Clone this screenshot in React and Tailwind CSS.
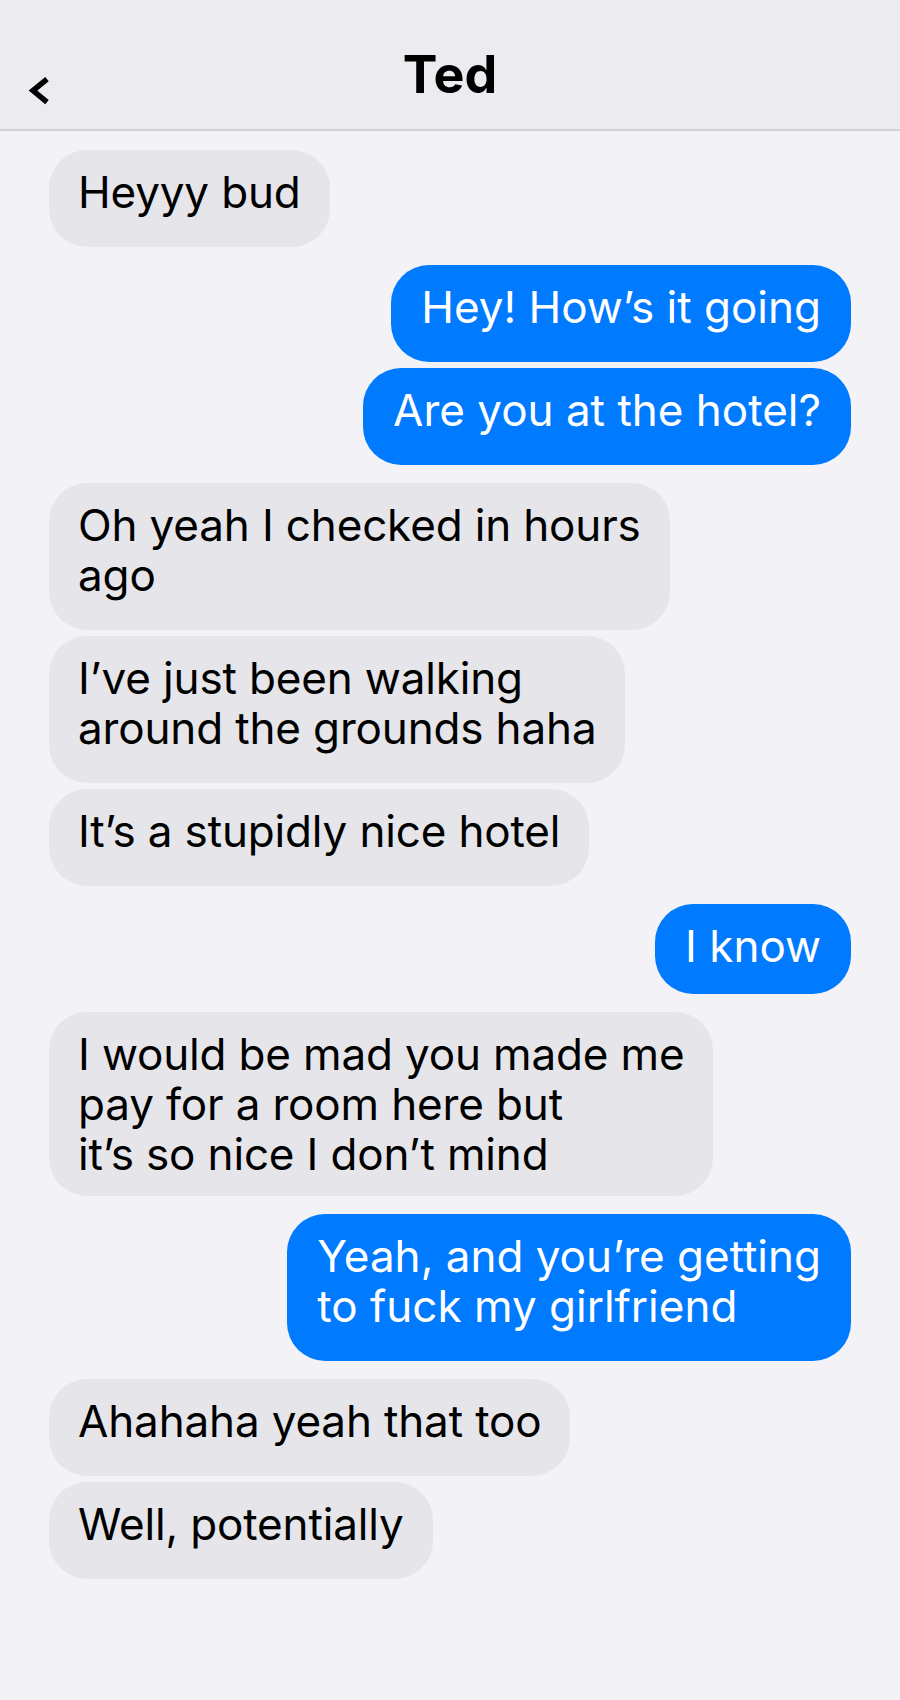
import React from "react";

const MESSAGES = [
  { from: "them", lines: ["Heyyy bud"] },
  { from: "me", lines: ["Hey! How’s it going"] },
  { from: "me", lines: ["Are you at the hotel?"] },
  { from: "them", lines: ["Oh yeah I checked in hours", "ago"] },
  { from: "them", lines: ["I’ve just been walking", "around the grounds haha"] },
  { from: "them", lines: ["It’s a stupidly nice hotel"] },
  { from: "me", lines: ["I know"], pad: "pb-[23px]" },
  {
    from: "them",
    lines: ["I would be mad you made me", "pay for a room here but", "it’s so nice I don’t mind"],
    pad: "pb-[17px]",
  },
  { from: "me", lines: ["Yeah, and you’re getting", "to fuck my girlfriend"] },
  { from: "them", lines: ["Ahahaha yeah that too"] },
  { from: "them", lines: ["Well, potentially"] },
];

function BackChevron() {
  return (
    <svg width="22" height="30" viewBox="0 0 22 30" className="mt-[76px]" aria-hidden="true">
      <polyline
        points="19,3 5,14.5 19,26"
        fill="none"
        stroke="#000"
        strokeWidth="5.5"
        strokeLinejoin="miter"
      />
    </svg>
  );
}

function Bubble({ msg, first, sameAsPrev }) {
  const mine = msg.from === "me";
  const gap = first ? "" : sameAsPrev ? "mt-[6px]" : "mt-[18px]";
  return (
    <div className={`flex ${mine ? "justify-end" : "justify-start"} ${gap}`}>
      <div
        className={`rounded-[38px] pt-[17px] ${msg.pad || "pb-[30px]"} text-[44px] leading-[50px] ${
          mine ? "bg-[#007aff] px-[30px] tracking-[0px] text-white" : "bg-[#e5e5ea] px-[29px] tracking-[-0.15px] text-black"
        }`}
      >
        {msg.lines.map((line, i) => (
          <div key={i} className="whitespace-nowrap">
            {line}
          </div>
        ))}
      </div>
    </div>
  );
}

export default function App() {
  return (
    <div className="min-h-[1700px] bg-[#f2f2f7] font-['Inter','Liberation_Sans',sans-serif]">
      {/* Nav bar */}
      <header className="grid h-[131px] grid-cols-[1fr_auto_1fr] items-start border-b-2 border-[#d1d1d6] bg-[#ebebf0] px-[28px]">
        <div>
          <BackChevron />
        </div>
        <h1 className="pt-[49px] text-[52px] font-bold leading-none text-black">Ted</h1>
        <div />
      </header>

      {/* Thread */}
      <main className="flex flex-col px-[49px] pt-[19px] pb-10">
        {MESSAGES.map((msg, i) => (
          <Bubble
            key={i}
            msg={msg}
            first={i === 0}
            sameAsPrev={i > 0 && MESSAGES[i - 1].from === msg.from}
          />
        ))}
      </main>
    </div>
  );
}
